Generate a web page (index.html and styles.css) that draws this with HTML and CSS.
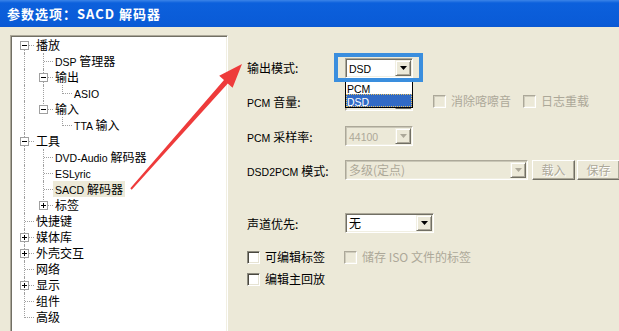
FILE: index.html
```html
<!DOCTYPE html>
<html>
<head>
<meta charset="utf-8">
<link rel="stylesheet" href="styles.css">
</head>
<body>
<div class="title">参数选项：SACD 解码器</div>
<div class="main">
  <div class="tree">
    <div class="row"><span class="c first"><i class="box"></i></span><span class="t">播放</span></div>
    <div class="row"><span class="c pipe"></span><span class="c tee"></span><span class="t"><span class="l">DSP </span>管理器</span></div>
    <div class="row"><span class="c pipe"></span><span class="c tee"><i class="box"></i></span><span class="t">输出</span></div>
    <div class="row"><span class="c pipe"></span><span class="c pipe"></span><span class="c elbow"></span><span class="t"><span class="l">ASIO</span></span></div>
    <div class="row"><span class="c pipe"></span><span class="c elbow"><i class="box"></i></span><span class="t">输入</span></div>
    <div class="row"><span class="c pipe"></span><span class="c"></span><span class="c elbow"></span><span class="t"><span class="l">TTA </span>输入</span></div>
    <div class="row"><span class="c tee"><i class="box"></i></span><span class="t">工具</span></div>
    <div class="row"><span class="c pipe"></span><span class="c tee"></span><span class="t"><span class="l">DVD-Audio </span>解码器</span></div>
    <div class="row"><span class="c pipe"></span><span class="c tee"></span><span class="t"><span class="l">ESLyric</span></span></div>
    <div class="row"><span class="c pipe"></span><span class="c tee"></span><span class="t sel"><span class="l">SACD </span>解码器</span></div>
    <div class="row"><span class="c pipe"></span><span class="c elbow"><i class="box plus"></i></span><span class="t">标签</span></div>
    <div class="row"><span class="c tee"></span><span class="t">快捷键</span></div>
    <div class="row"><span class="c tee"><i class="box plus"></i></span><span class="t">媒体库</span></div>
    <div class="row"><span class="c tee"><i class="box plus"></i></span><span class="t">外壳交互</span></div>
    <div class="row"><span class="c tee"></span><span class="t">网络</span></div>
    <div class="row"><span class="c tee"><i class="box plus"></i></span><span class="t">显示</span></div>
    <div class="row"><span class="c tee"></span><span class="t">组件</span></div>
    <div class="row"><span class="c elbow"></span><span class="t">高级</span></div>
  </div>

  <div class="panel">
    <div class="prow ra">
      <span class="lab">输出模式:</span>
      <div class="cw">
        <div class="combo w68"><span class="field"><span class="l">DSD</span></span><span class="dd"><svg width="7" height="4" viewBox="0 0 7 4"><path d="M0 0h7L3.5 4z" fill="#000"/></svg></span></div>
        <div class="list">
          <div><span class="l">PCM</span></div>
          <div class="on"><span class="l">DSD</span></div>
        </div>
        <div class="frame"></div>
      </div>
    </div>
    <div class="prow rb">
      <span class="lab"><span class="l">PCM </span>音量:</span>
      <div class="combo dis w68"><span class="field"></span><span class="dd"><svg width="7" height="4" viewBox="0 0 7 4"><path d="M0 0h7L3.5 4z" fill="#aca899"/></svg></span></div>
      <span class="cb off m20"></span><span class="dtxt">消除喀嚓音</span>
      <span class="cb off m12"></span><span class="dtxt">日志重载</span>
    </div>
    <div class="prow rc">
      <span class="lab"><span class="l">PCM </span>采样率:</span>
      <div class="combo dis w68"><span class="field"><span class="l">44100</span></span><span class="dd"><svg width="7" height="4" viewBox="0 0 7 4"><path d="M0 0h7L3.5 4z" fill="#aca899"/></svg></span></div>
    </div>
    <div class="prow rd">
      <span class="lab"><span class="l">DSD2PCM </span>模式:</span>
      <div class="combo dis w183"><span class="field">多级(定点)</span><span class="dd"><svg width="7" height="4" viewBox="0 0 7 4"><path d="M0 0h7L3.5 4z" fill="#aca899"/></svg></span></div>
      <span class="pbtn b1">载入</span>
      <span class="pbtn b2">保存</span>
    </div>
    <div class="prow re">
      <span class="lab">声道优先:</span>
      <div class="combo w89"><span class="field">无</span><span class="dd"><svg width="7" height="4" viewBox="0 0 7 4"><path d="M0 0h7L3.5 4z" fill="#000"/></svg></span></div>
    </div>
    <div class="prow rf">
      <span class="cb"></span><span class="ctxt">可编辑标签</span>
      <span class="cb off m19"></span><span class="dtxt">储存 ISO 文件的标签</span>
    </div>
    <div class="prow rg">
      <span class="cb"></span><span class="ctxt">编辑主回放</span>
    </div>
  </div>
</div>
<svg class="arrow" width="619" height="331" viewBox="0 0 619 331">
  <polygon points="130.3,188.3 224,80.1 219.2,75.8 242,64 232.6,87.8 227.8,83.5 131.7,189.7" fill="#ee3b3b"/>
</svg>
</body>
</html>
```
FILE: styles.css
```css
* { box-sizing: border-box; }
html, body { margin: 0; padding: 0; }
body {
  width: 619px;
  height: 331px;
  overflow: hidden;
  position: relative;
  background: #ece9d8;
  font-family: "Noto Sans CJK SC", "Liberation Sans", sans-serif;
  font-size: 12px;
  color: #000;
}
.l { font-family: "Liberation Sans", Arial, sans-serif; font-size: 10.5px; }

.title {
  height: 27px;
  line-height: 27px;
  padding-left: 7px;
  color: #fff;
  font-weight: bold;
  font-size: 13px;
  letter-spacing: 1px;
  background: linear-gradient(#3b84e8 0, #0c60dc 3px, #0a5bd7 24px, #0a58d2 27px);
}

.main { display: flex; align-items: flex-start; height: 304px; }

.tree {
  flex: none;
  margin: 8px 0 0 10px;
  width: 218px;
  height: 310px;
  background: #fff;
  border: 1px solid;
  border-color: #aca899 #fff #fff #aca899;
  box-shadow: inset 1px 1px #716f64, inset -1px -1px #f1efe2;
  padding: 1px 0 0 4px;
}
.row { display: flex; height: 16px; line-height: 16px; white-space: nowrap; }
.c { flex: none; width: 19px; height: 16px; position: relative; }
.c::before, .c::after { content: ""; position: absolute; }
.pipe::before, .tee::before { left: 9px; top: 0; height: 16px; border-left: 1px dotted #a0a0a0; }
.elbow::before { left: 9px; top: 0; height: 9px; border-left: 1px dotted #a0a0a0; }
.first::before { left: 9px; top: 8px; height: 8px; border-left: 1px dotted #a0a0a0; }
.tee::after, .elbow::after, .first::after { left: 10px; top: 8px; width: 9px; border-top: 1px dotted #a0a0a0; }
.box {
  position: absolute; left: 5px; top: 4px; width: 9px; height: 9px;
  border: 1px solid #a0a0a0; background: #fff; z-index: 1;
}
.box::before { content: ""; position: absolute; left: 1px; top: 3px; width: 5px; height: 1px; background: #000; }
.box.plus::after { content: ""; position: absolute; left: 3px; top: 1px; width: 1px; height: 5px; background: #000; }
.t { padding: 0 2px; }
.sel { background: #ece9d8; }

.panel { flex: 1; display: flex; flex-direction: column; padding: 26px 0 0 19px; white-space: nowrap; }
.prow { display: flex; align-items: center; flex: none; }
.lab { width: 98px; flex: none; }
.ra { height: 29px; }
.rb { height: 20px; margin-top: 9px; }
.rc { height: 20px; margin-top: 15px; }
.rd { height: 20px; margin-top: 14px; }
.re { height: 20px; margin-top: 33px; }
.rf { height: 14px; margin-top: 17px; }
.rg { height: 14px; margin-top: 8px; }

.cw { position: relative; }
.combo {
  flex: none;
  display: flex;
  height: 20px;
  border: 1px solid;
  border-color: #aca899 #fff #fff #aca899;
  box-shadow: inset 1px 1px #716f64, inset -1px -1px #f1efe2;
  background: #fff;
  padding: 1px;
}
.w68 { width: 68px; }
.w89 { width: 89px; }
.w183 { width: 183px; }
.field { flex: 1; line-height: 16px; padding-left: 2px; overflow: hidden; }
.dd {
  flex: none;
  width: 16px; height: 16px;
  display: flex; align-items: center; justify-content: center;
  background: #ece9d8;
  border: 1px solid;
  border-color: #f1efe2 #716f64 #716f64 #f1efe2;
  box-shadow: inset 1px 1px #fff, inset -1px -1px #aca899;
}
.dd svg { display: block; }
.combo.dis { background: #ece9d8; color: #aca899; box-shadow: inset 1px 1px #c9c6b6, inset -1px -1px #f1efe2; }

.list {
  position: absolute; left: 0; top: 22px; width: 68px;
  border: 1px solid #000; background: #fff; z-index: 2;
}
.list div { height: 13px; line-height: 13px; padding-left: 1px; }
.list .on { background: #316ac5; color: #fff; outline: 1px dotted #e8c060; outline-offset: -1px; }
.frame {
  position: absolute; left: -11px; top: -5px; width: 89px; height: 29px;
  border: 4px solid #3a8ede; z-index: 3;
}

.cb {
  flex: none;
  width: 13px; height: 13px;
  border: 1px solid;
  border-color: #8c8a7e #fff #fff #8c8a7e;
  box-shadow: inset 1px 1px #4a4840, inset -1px -1px #e6e3d3;
  background: #fff;
  margin-right: 5px;
}
.cb.off { background: #ece9d8; border-color: #aca899 #fff #fff #aca899; box-shadow: inset 1px 1px #cfccbc, inset -1px -1px #f1efe2; }
.m20 { margin-left: 20px; }
.m12 { margin-left: 12px; }
.m19 { margin-left: 19px; }
.ctxt { line-height: 14px; }
.dtxt { color: #aca899; line-height: 14px; }

.pbtn {
  flex: none;
  width: 43px; height: 20px;
  line-height: 18px;
  text-align: center;
  background: #ece9d8;
  border: 1px solid;
  border-color: #fff #716f64 #716f64 #fff;
  box-shadow: inset -1px -1px #aca899;
  color: #aca899;
  text-shadow: 1px 1px #fff;
}
.b1 { margin-left: 4px; }
.b2 { margin-left: 2px; }

.arrow { position: absolute; left: 0; top: 0; pointer-events: none; z-index: 10; }
```
